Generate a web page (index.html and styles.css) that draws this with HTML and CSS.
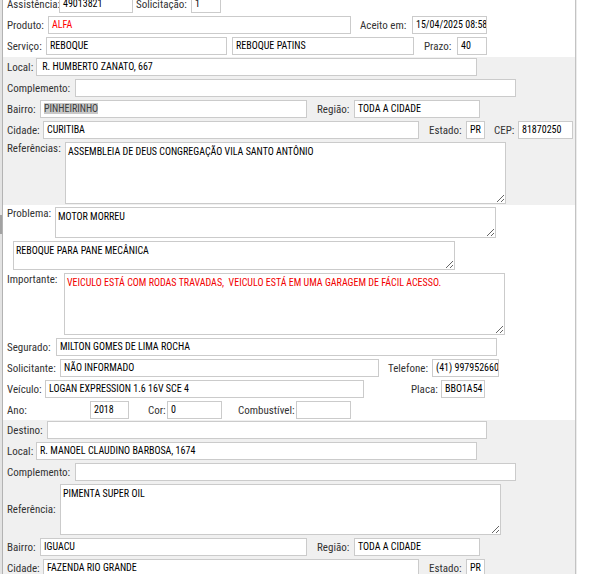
FILE: index.html
```html
<!DOCTYPE html>
<html lang="pt-BR">
<head>
<meta charset="utf-8">
<title>Atendimento</title>
<link rel="stylesheet" href="styles.css">
</head>
<body>
<div class="screen">
  <div class="edge"><div class="thumb"></div></div>
  <main class="panel">
    <div class="scroll">
      <section class="sec sec-top">
        <div class="row">
          <span class="lbl w52">Assistência:</span><div class="fld w74">49013821</div>
          <span class="lbl ml3 w55">Solicitação:</span><div class="fld w30">1</div>
        </div>
        <div class="row">
          <span class="lbl w41">Produto:</span><div class="fld w303 red">ALFA</div>
          <span class="lbl ml9 w52">Aceito em:</span><div class="fld w75">15/04/2025 08:58</div>
        </div>
        <div class="row">
          <span class="lbl w39">Serviço:</span><div class="fld w181">REBOQUE</div>
          <div class="fld ml5 w182">REBOQUE PATINS</div>
          <span class="lbl ml10 w33">Prazo:</span><div class="fld w30">40</div>
        </div>
      </section>

      <section class="sec grey sec-orig">
        <div class="row">
          <span class="lbl w29">Local:</span><div class="fld w441">&nbsp;R. HUMBERTO ZANATO, 667</div>
        </div>
        <div class="row">
          <span class="lbl w68">Complemento:</span><div class="fld w441"></div>
        </div>
        <div class="row">
          <span class="lbl w33">Bairro:</span><div class="fld w267"><span class="sel">PINHEIRINHO</span></div>
          <span class="lbl ml10 w37">Região:</span><div class="fld w126">TODA A CIDADE</div>
        </div>
        <div class="row">
          <span class="lbl w36">Cidade:</span><div class="fld w376">CURITIBA</div>
          <span class="lbl ml10 w37">Estado:</span><div class="fld w19">PR</div>
          <span class="lbl ml9 w24">CEP:</span><div class="fld w55">81870250</div>
        </div>
        <div class="row row-top">
          <span class="lbl w58">Referências:</span>
          <textarea class="area w441 h62" readonly>ASSEMBLEIA DE DEUS CONGREGAÇÃO VILA SANTO ANTÔNIO</textarea>
        </div>
      </section>

      <section class="sec sec-mid">
        <div class="row row-top">
          <span class="lbl w48">Problema:</span>
          <textarea class="area w441 h31" readonly>MOTOR MORREU</textarea>
        </div>
        <div class="row row-top">
          <textarea class="area ml6 w442 h29" readonly>REBOQUE PARA PANE MECÂNICA</textarea>
        </div>
        <div class="row row-top">
          <span class="lbl w57">Importante:</span>
          <textarea class="area red w441 h62" readonly>VEICULO ESTÁ COM RODAS TRAVADAS,  VEICULO ESTÁ EM UMA GARAGEM DE FÁCIL ACESSO.</textarea>
        </div>
        <div class="row">
          <span class="lbl w49">Segurado:</span><div class="fld w441">MILTON GOMES DE LIMA ROCHA</div>
        </div>
        <div class="row">
          <span class="lbl w53">Solicitante:</span><div class="fld w319">NÃO INFORMADO</div>
          <span class="lbl ml9 w44">Telefone:</span><div class="fld w67">(41) 997952660</div>
        </div>
        <div class="row">
          <span class="lbl w38">Veículo:</span><div class="fld w319">LOGAN EXPRESSION 1.6 16V SCE 4</div>
          <span class="lbl ml47 w30">Placa:</span><div class="fld w44">BBO1A54</div>
        </div>
        <div class="row">
          <span class="lbl w83">Ano:</span><div class="fld w39">2018</div>
          <span class="lbl ml19 w19">Cor:</span><div class="fld w55">0</div>
          <span class="lbl ml16 w58">Combustível:</span><div class="fld w55"></div>
        </div>
      </section>

      <section class="sec grey sec-dest">
        <div class="row">
          <span class="lbl w40">Destino:</span><div class="fld w440"></div>
        </div>
        <div class="row">
          <span class="lbl w29">Local:</span><div class="fld w441">R. MANOEL CLAUDINO BARBOSA, 1674</div>
        </div>
        <div class="row">
          <span class="lbl w68">Complemento:</span><div class="fld w441"></div>
        </div>
        <div class="row">
          <span class="lbl w53">Referência:</span>
          <textarea class="area w441 h51" readonly>PIMENTA SUPER OIL</textarea>
        </div>
        <div class="row">
          <span class="lbl w33">Bairro:</span><div class="fld w267">IGUACU</div>
          <span class="lbl ml10 w37">Região:</span><div class="fld w126">TODA A CIDADE</div>
        </div>
        <div class="row">
          <span class="lbl w36">Cidade:</span><div class="fld w376">FAZENDA RIO GRANDE</div>
          <span class="lbl ml10 w37">Estado:</span><div class="fld w19">PR</div>
        </div>
      </section>
    </div>
  </main>
  <div class="aside"></div>
</div>
</body>
</html>
```
FILE: styles.css
```css
* { box-sizing: border-box; }

html, body {
  margin: 0;
  padding: 0;
  background: #ffffff;
}

body {
  font-family: "Roboto Condensed", "DejaVu Sans Condensed", "Liberation Sans", sans-serif;
  font-size: 11px;
  color: #000;
}

.screen {
  display: flex;
  width: 597px;
  height: 574px;
  overflow: hidden;
}

.edge {
  flex: none;
  width: 3px;
  background: #e3e3e3;
  border-right: 1px solid #b3b3b3;
}

.thumb {
  margin-top: 215px;
  height: 19px;
  width: 2px;
  background: #a2a2a2;
}

.panel {
  flex: none;
  width: 573px;
  border-right: 1px solid #c3c3c3;
  overflow: hidden;
}

.scroll {
  margin-top: -5px;
}

.aside {
  flex: 1;
  border-left: 1px solid #ececec;
}

.sec {
  display: flex;
  flex-direction: column;
  gap: 3px;
  padding-left: 4px;
}

.sec-top { padding-bottom: 2px; }
.sec-orig { padding-top: 1px; padding-bottom: 1px; }
.sec-mid { padding-top: 2px; padding-bottom: 1px; }
.sec-dest { padding-top: 1px; }

.grey { background: #f0f0f0; }

.row {
  display: flex;
  align-items: center;
}

.row-top { align-items: flex-start; }

.lbl {
  flex: none;
  color: #333333;
  font-size: 11px;
  white-space: nowrap;
  line-height: 13px;
}

.fld {
  flex: none;
  height: 18px;
  line-height: 16px;
  padding: 0 3px;
  border: 1px solid #cbcbcb;
  background: #fff;
  font-size: 10px;
  color: #000;
  white-space: pre;
  overflow: hidden;
}

.sel {
  background: #c8c8c8;
  color: #3c3c3c;
}

.area {
  flex: none;
  display: block;
  margin: 0;
  padding: 3px 2px;
  border: 1px solid #cbcbcb;
  background: #fff;
  font-family: "Roboto Condensed", "DejaVu Sans Condensed", "Liberation Sans", sans-serif;
  font-size: 10px;
  line-height: 12px;
  color: #000;
  outline: none;
  overflow: hidden;
}

.red { color: #ff0000; }
.area.red { color: #f20000; }

/* widths */
.w19 { width: 19px; }
.w24 { width: 24px; }
.w29 { width: 29px; }
.w30 { width: 30px; }
.w33 { width: 33px; }
.w36 { width: 36px; }
.w37 { width: 37px; }
.w38 { width: 38px; }
.w39 { width: 39px; }
.w40 { width: 40px; }
.w41 { width: 41px; }
.w44 { width: 44px; }
.w48 { width: 48px; }
.w49 { width: 49px; }
.w52 { width: 52px; }
.w53 { width: 53px; }
.w55 { width: 55px; }
.w57 { width: 57px; }
.w58 { width: 58px; }
.w67 { width: 67px; }
.w68 { width: 68px; }
.w74 { width: 74px; }
.w75 { width: 75px; }
.w83 { width: 83px; }
.w126 { width: 126px; }
.w181 { width: 181px; }
.w182 { width: 182px; }
.w267 { width: 267px; }
.w303 { width: 303px; }
.w319 { width: 319px; }
.w376 { width: 376px; }
.w440 { width: 440px; }
.w441 { width: 441px; }
.w442 { width: 442px; }

/* heights */
.h29 { height: 29px; }
.h31 { height: 31px; }
.h51 { height: 51px; }
.h62 { height: 62px; }

/* left offsets */
.ml3 { margin-left: 3px; }
.ml5 { margin-left: 5px; }
.ml6 { margin-left: 6px; }
.ml9 { margin-left: 9px; }
.ml10 { margin-left: 10px; }
.ml16 { margin-left: 16px; }
.ml19 { margin-left: 19px; }
.ml47 { margin-left: 47px; }
```
